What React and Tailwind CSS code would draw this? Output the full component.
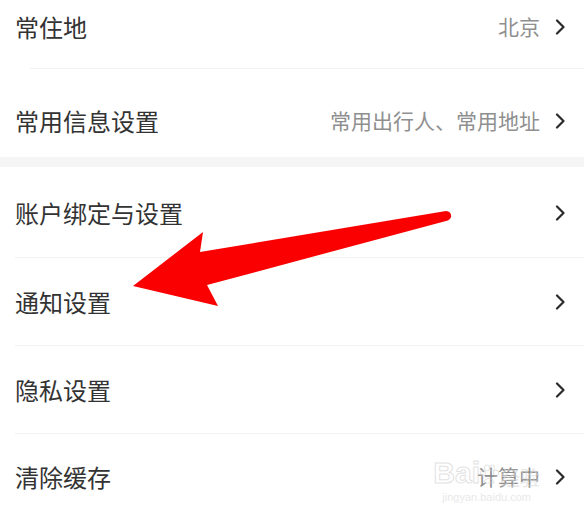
import React from 'react';

const font = { fontFamily: '"Noto Sans CJK SC", "Noto Sans", sans-serif' };

function Chevron() {
    return (
        <svg width="12" height="16" viewBox="0 0 12 16" className="shrink-0">
            <path d="M3 1.5 L9.5 8 L3 14.5" fill="none" stroke="#2b2b2b" strokeWidth="2.2" strokeLinecap="round" strokeLinejoin="round" />
        </svg>
    );
}

function Row({ label, value, className, children }) {
    return (
        <div className={`relative flex items-center justify-between pl-[15px] pr-[18px] ${className}`}>
            <span className="text-[24px] text-[#333333]">{label}</span>
            <div className="flex items-center gap-[14px]">
                {value && <span className="text-[21px] text-[#8f8f8f]">{value}</span>}
                <Chevron />
            </div>
            {children}
        </div>
    );
}

export default function App() {
    return (
        <div className="relative w-[584px] h-[518px] overflow-hidden bg-white" style={font}>
            <Row label="常住地" value="北京" className="h-[68px] pb-[14px]" />
            <div className="ml-[30px] h-px bg-[#f2f2f2]"></div>
            <Row label="常用信息设置" value="常用出行人、常用地址" className="h-[88px] pt-[16px]" />
            <div className="h-[10px] bg-[#f5f5f5]"></div>
            <Row label="账户绑定与设置" className="h-[90px] pt-[2px]" />
            <div className="ml-[15px] h-px bg-[#f2f2f2]"></div>
            <Row label="通知设置" className="h-[87px]" />
            <div className="ml-[15px] h-px bg-[#f2f2f2]"></div>
            <Row label="隐私设置" className="h-[87px]" />
            <div className="ml-[15px] h-px bg-[#f2f2f2]"></div>
            <Row label="清除缓存" value="计算中" className="h-[86px]">
                <div className="absolute right-[44px] top-[24px] flex flex-col items-center opacity-60 pointer-events-none">
                    <div className="flex items-end">
                        <span className="text-[30px] leading-none font-bold text-transparent" style={{ fontFamily: '"Liberation Sans", sans-serif', WebkitTextStroke: '1px #d0d0d0' }}>Bai</span>
                        <svg width="22" height="22" viewBox="0 0 22 22" className="-ml-[2px] mb-[2px]">
                            <g fill="none" stroke="#d0d0d0" strokeWidth="1">
                                <ellipse cx="5" cy="9" rx="2.5" ry="3" />
                                <ellipse cx="9" cy="4" rx="2.5" ry="3" />
                                <ellipse cx="14" cy="4" rx="2.5" ry="3" />
                                <ellipse cx="18" cy="9" rx="2.5" ry="3" />
                                <path d="M6 19 C6 13 16 13 16 19 Z" />
                            </g>
                        </svg>
                        <span className="text-[20px] leading-none text-[#d6d6d6]">经验</span>
                    </div>
                    <span className="text-[11px] leading-none mt-[4px] text-[#dadada]" style={{ fontFamily: '"Liberation Sans", sans-serif' }}>jingyan.baidu.com</span>
                </div>
            </Row>

            <svg className="absolute left-0 top-0 pointer-events-none" width="584" height="518" viewBox="0 0 584 518">
                <path
                    d="M133 286 L203 232 L200 252 L446 211 Q452 212 451 217 Q450 220 446 221 L207 285 L218 306 Z"
                    fill="#fb0000"
                />
            </svg>
        </div>
    );
}
